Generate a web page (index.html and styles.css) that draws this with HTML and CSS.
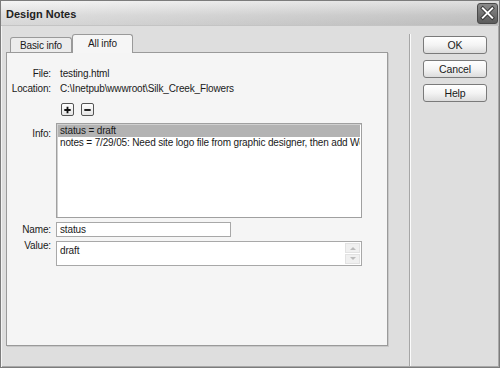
FILE: index.html
```html
<!DOCTYPE html>
<html>
<head>
<meta charset="utf-8">
<link rel="stylesheet" href="styles.css">
</head>
<body>
<div class="window">
  <div class="titlebar">
    <span class="title">Design Notes</span>
    <span class="close"><svg width="20" height="20" viewBox="0 0 20 20"><path d="M5 5 L15 15 M15 5 L5 15" stroke="#3a3a3a" stroke-width="4" stroke-linecap="square"/><path d="M5 5 L15 15 M15 5 L5 15" stroke="#fff" stroke-width="2" stroke-linecap="square"/></svg></span>
  </div>
  <div class="body">
    <div class="left">
      <div class="tabs">
        <div class="tab">Basic info</div>
        <div class="tab active">All info</div>
      </div>
      <div class="panel">
        <div class="form">
          <div class="label">File:</div>
          <div class="value">testing.html</div>
          <div class="label">Location:</div>
          <div class="value">C:\Inetpub\wwwroot\Silk_Creek_Flowers</div>
          <div></div>
          <div class="pm">
            <span class="sq"><svg width="12" height="12" viewBox="0 0 12 12"><path d="M6 2.5 V9.5 M2.5 6 H9.5" stroke="#111" stroke-width="2"/></svg></span>
            <span class="sq"><svg width="12" height="12" viewBox="0 0 12 12"><path d="M2.5 6 H9.5" stroke="#111" stroke-width="2"/></svg></span>
          </div>
          <div class="label info-label">Info:</div>
          <div class="listbox">
            <div class="item sel">status = draft</div>
            <div class="item">notes = 7/29/05: Need site logo file from graphic designer, then add We</div>
          </div>
          <div class="label name-label">Name:</div>
          <div class="input">status</div>
          <div class="label value-label">Value:</div>
          <div class="textarea">
            <span class="ta-text">draft</span>
            <span class="scroll">
              <span class="arr"><svg width="6" height="4" viewBox="0 0 6 4"><path d="M0 4 L3 1 L6 4Z" fill="#bbb"/></svg></span>
              <span class="arr"><svg width="6" height="4" viewBox="0 0 6 4"><path d="M0 0 L3 3 L6 0Z" fill="#bbb"/></svg></span>
            </span>
          </div>
        </div>
      </div>
    </div>
    <div class="sep"></div>
    <div class="buttons">
      <div class="btn">OK</div>
      <div class="btn">Cancel</div>
      <div class="btn">Help</div>
    </div>
  </div>
</div>
</body>
</html>
```
FILE: styles.css
```css
* { box-sizing: border-box; }
html, body { margin: 0; padding: 0; }
body {
  width: 500px;
  height: 368px;
  font-family: "Liberation Sans", Arial, sans-serif;
  font-size: 10px;
  letter-spacing: -0.15px;
  color: #1a1a1a;
  background: #dcdcdc;
}
.window {
  width: 500px;
  height: 368px;
  border: 1px solid #7c7c7c;
  box-shadow: inset 1px 1px 0 #f4f4f4, inset -1px -1px 0 #a8a8a8;
  background: #dedede;
  display: flex;
  flex-direction: column;
}
.titlebar {
  height: 25px;
  display: flex;
  align-items: center;
  justify-content: space-between;
  padding: 0 1px 0 5px;
  background: linear-gradient(to right, rgba(255,255,255,0.25), rgba(0,0,0,0.08)), linear-gradient(#f2f2f2, #d4d4d4 60%, #cbcbcb);
  border-bottom: 1px solid #c4c4c4;
}
.title {
  font-weight: bold;
  font-size: 11px;
  letter-spacing: 0;
  color: #222;
  padding-top: 1px;
}
.close {
  width: 21px;
  height: 21px;
  border-radius: 3px;
  background: linear-gradient(#8a8a8a, #5c5c5c);
  border: 1px solid #4a4a4a;
  display: flex;
  align-items: center;
  justify-content: center;
}
.close svg { display: block; }
.body {
  flex: 1;
  display: flex;
  padding: 8px 0 0 5px;
}
.left {
  width: 382px;
  display: flex;
  flex-direction: column;
}
.tabs {
  display: flex;
  align-items: flex-end;
  padding-left: 4px;
  height: 18px;
  position: relative;
  z-index: 1;
}
.tab {
  height: 15px;
  width: 62px;
  display: flex;
  align-items: center;
  justify-content: center;
  white-space: nowrap;
  border: 1px solid #9a9a9a;
  border-bottom: none;
  border-radius: 3px 3px 0 0;
  background: #ececec;
}
.tab.active {
  width: 61px;
  height: 19px;
  background: #f6f6f6;
  margin-bottom: -1px;
  padding-bottom: 1px;
}
.panel {
  height: 294px;
  border: 1px solid #9a9a9a;
  background: #f5f5f5;
  box-shadow: 1px 1px 0 #c8c8c8;
  padding-top: 13px;
}
.form {
  display: grid;
  grid-template-columns: 44px 306px;
  column-gap: 5px;
  align-items: start;
}
.label {
  text-align: right;
  line-height: 15px;
}
.value {
  line-height: 15px;
  padding-left: 4px;
}
.pm {
  display: flex;
  gap: 7px;
  padding-left: 5px;
  margin-top: 7px;
  height: 13px;
}
.sq {
  width: 13px;
  height: 13px;
  border: 1px solid #555;
  border-radius: 2px;
  background: linear-gradient(#fff, #e4e4e4);
  display: flex;
  align-items: center;
  justify-content: center;
}
.sq svg { display: block; }
.info-label { margin-top: 12px; line-height: 12px; }
.listbox {
  margin-top: 7px;
  height: 95px;
  border: 1px solid #a0a0a0;
  box-shadow: inset 1px 1px 0 #d0d0d0;
  background: #fff;
  padding: 1px 1px;
  overflow: hidden;
}
.item {
  line-height: 12px;
  height: 12px;
  padding-left: 2px;
  white-space: nowrap;
  overflow: hidden;
}
.item.sel { background: #b3b3b3; }
.name-label { margin-top: 4px; line-height: 15px; }
.input {
  margin-top: 4px;
  width: 175px;
  height: 15px;
  border: 1px solid #a8a8a8;
  background: #fff;
  line-height: 13px;
  padding-left: 3px;
}
.value-label { margin-top: 3px; line-height: 12px; }
.textarea {
  margin-top: 4px;
  height: 25px;
  border: 1px solid #a8a8a8;
  background: #fff;
  display: flex;
  justify-content: space-between;
  padding-left: 3px;
}
.ta-text { line-height: 13px; padding-top: 2px; }
.scroll {
  display: flex;
  flex-direction: column;
  width: 15px;
  margin: 1px 1px 1px 0;
  gap: 1px;
}
.arr {
  flex: 1;
  background: #f0f0f0;
  border: 1px solid #e2e2e2;
  display: flex;
  align-items: center;
  justify-content: center;
}
.arr svg { display: block; }
.sep {
  margin-left: 21px;
  width: 2px;
  height: 332px;
  border-left: 1px solid #a6a6a6;
  border-right: 1px solid #fbfbfb;
}
.buttons {
  margin-left: 12px;
  padding-top: 2px;
  display: flex;
  flex-direction: column;
  gap: 6px;
}
.btn {
  width: 64px;
  height: 18px;
  border: 1px solid #7a7a7a;
  border-radius: 3px;
  background: linear-gradient(#ffffff, #f4f4f4 50%, #dcdcdc);
  display: flex;
  align-items: center;
  justify-content: center;
  font-size: 10.5px;
}
```
